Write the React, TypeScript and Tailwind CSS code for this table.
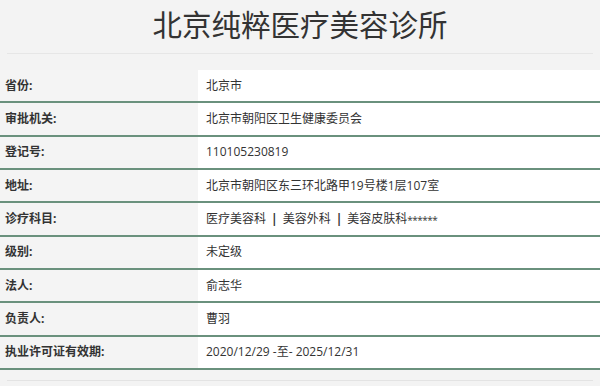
import React from "react";

const rows: [string, React.ReactNode][] = [
  ["省份:", "北京市"],
  ["审批机关:", "北京市朝阳区卫生健康委员会"],
  ["登记号:", "110105230819"],
  ["地址:", "北京市朝阳区东三环北路甲19号楼1层107室"],
  [
    "诊疗科目:",
    <>
      医疗美容科
      <span className="font-bold text-[#333] px-[5px]">|</span>
      美容外科
      <span className="font-bold text-[#333] px-[5px]">|</span>
      美容皮肤科
      <span className="text-[10px] tracking-[-0.5px] self-start mt-[10px]">******</span>
    </>,
  ],
  ["级别:", "未定级"],
  ["法人:", "俞志华"],
  ["负责人:", "曹羽"],
  ["执业许可证有效期:", "2020/12/29 -至- 2025/12/31"],
];

export default function App() {
  return (
    <div
      className="w-[600px] h-[386px] bg-[#f3f3f3] text-[#333] overflow-hidden"
      style={{ fontFamily: '"Open Sans", "Noto Sans CJK SC", sans-serif' }}
    >
      <div className="h-[54px] flex items-center justify-center border-b border-[#e6e6e6] mx-[7px]">
        <h1 className="text-[29.5px] leading-none font-normal text-[#333] mt-[-3px]">北京纯粹医疗美容诊所</h1>
      </div>
      <div className="mt-[16px]">
        {rows.map(([k, v], i) => (
          <div
            key={i}
            className="flex h-[33.33px] border-b-2 border-[#6a917d]"
          >
            <div className="w-[198px] bg-[#f4f4f4] flex items-center pl-[5px] text-[12px] font-bold text-[#333]">
              {k}
            </div>
            <div className="flex-1 bg-white flex items-center pl-[8px] text-[12px] text-[#333]">
              {v}
            </div>
          </div>
        ))}
      </div>
      <div className="mt-[10px] mx-[7px] border-t border-[#e3e3e3]"></div>
    </div>
  );
}
